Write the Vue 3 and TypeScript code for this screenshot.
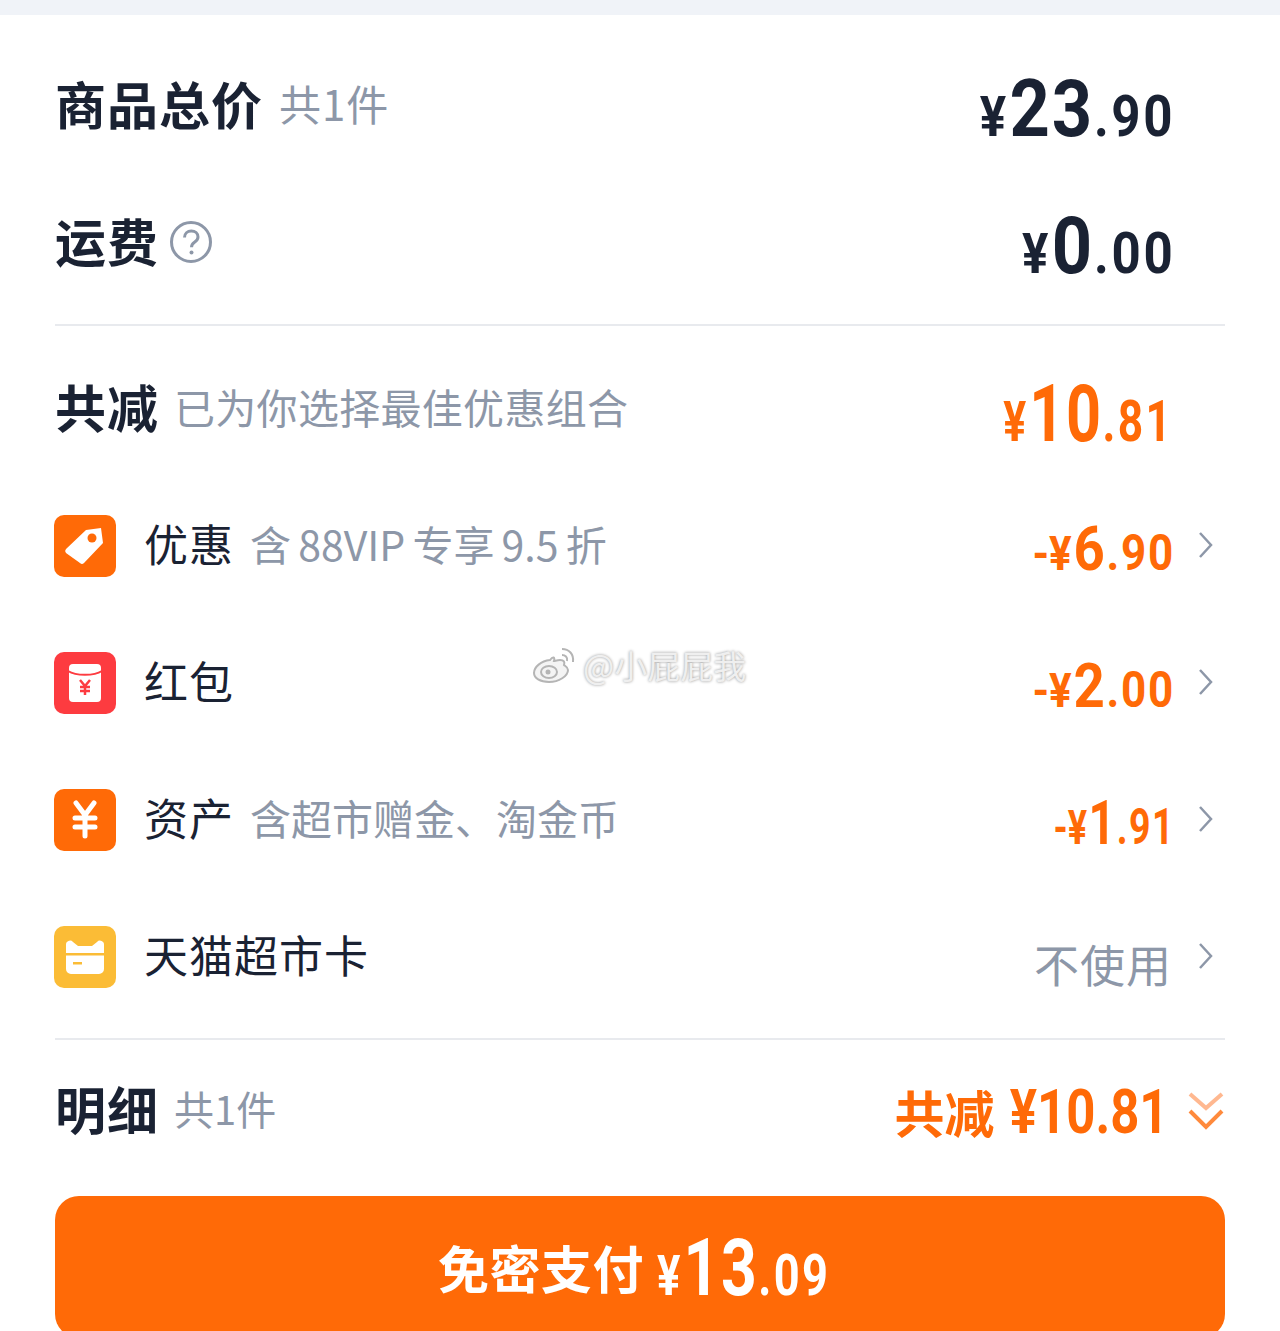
<script setup lang="ts">
interface Row { icon: string; label: string; note: string; value: string; big: string; small: string }
const rows: Row[] = [
  { icon: 'tag', label: '优惠', note: '含 88VIP 专享 9.5 折', value: '-¥', big: '6', small: '.90' },
  { icon: 'red', label: '红包', note: '', value: '-¥', big: '2', small: '.00' },
  { icon: 'coin', label: '资产', note: '含超市赠金、淘金币', value: '-¥', big: '1', small: '.91' },
  { icon: 'card', label: '天猫超市卡', note: '', value: '', big: '', small: '' },
]
</script>

<template>
  <div class="page">
    <div class="topbar"></div>
    <section class="summary">
      <div class="line first">
        <div class="left"><span class="title">商品总价</span><span class="note">共1件</span></div>
        <div class="price dark"><span class="cur">¥</span><span class="big">23</span><span class="small">.90</span></div>
      </div>
      <div class="line second">
        <div class="left">
          <span class="title">运费</span>
          <svg class="help" viewBox="0 0 44 44" width="44" height="44">
            <circle cx="22" cy="22" r="19.5" fill="none" stroke="#8d97a8" stroke-width="3"/>
            <path d="M15.5 17.5c0-4 3-6.500 6.800-6.500 3.900 0 6.700 2.500 6.700 5.900 0 2.700-1.600 4-3.500 5.300-1.900 1.300-3 2.500-3 5" fill="none" stroke="#8d97a8" stroke-width="3"/>
            <circle cx="22.500" cy="32.500" r="2" fill="#8d97a8"/>
          </svg>
        </div>
        <div class="price dark"><span class="cur">¥</span><span class="big">0</span><span class="small">.00</span></div>
      </div>
    </section>
    <section class="discounts">
      <div class="line third">
        <div class="left"><span class="title">共减</span><span class="note long">已为你选择最佳优惠组合</span></div>
        <div class="price orange total"><span class="cur">¥</span><span class="big">10</span><span class="small">.81</span></div>
      </div>
      <div v-for="row in rows" :key="row.label" class="row">
        <div class="left">
          <span class="icon" :class="row.icon">
            <svg v-if="row.icon === 'tag'" viewBox="0 0 62 62" width="62" height="62">
              <path d="M12 34 32 15l15-2 2 15-19 20a3 3 0 0 1-4 0L12 38a3 3 0 0 1 0-4z" fill="#fff"/>
              <circle cx="38" cy="23" r="4.500" fill="#ff6a07"/>
            </svg>
            <svg v-else-if="row.icon === 'red'" viewBox="0 0 62 62" width="62" height="62">
              <rect x="15" y="12" width="32" height="38" rx="4" fill="#fff"/>
              <path d="M14 19c8 5 26 5 34 0" fill="none" stroke="#fd3b40" stroke-width="2"/>
              <path d="M26 28l5 6 5-6M31 34v9M26 35h10M26 39h10" fill="none" stroke="#fd3b40" stroke-width="2.500"/>
            </svg>
            <svg v-else-if="row.icon === 'coin'" viewBox="0 0 62 62" width="62" height="62">
              <path d="M22 14l9 12 9-12M31 26v21M21 29h20M21 38h20" fill="none" stroke="#fff" stroke-width="5" stroke-linecap="round"/>
            </svg>
            <svg v-else viewBox="0 0 62 62" width="62" height="62">
              <path d="M12 19a4 4 0 0 1 7-3l5 4h14l5-4a4 4 0 0 1 7 3v24a5 5 0 0 1-5 5H17a5 5 0 0 1-5-5z" fill="#fff"/>
              <path d="M12 27h38v2.500H12z" fill="#fbbc36"/>
              <path d="M19 36h9v2.500h-9z" fill="#fbbc36"/>
            </svg>
          </span>
          <span class="label">{{ row.label }}</span>
          <span v-if="row.note" class="note rownote">{{ row.note }}</span>
        </div>
        <div class="right">
          <div v-if="row.value" class="price orange small-price" :class="{ narrow: row.big === '1' }"><span class="cur">{{ row.value }}</span><span class="big">{{ row.big }}</span><span class="small">{{ row.small }}</span></div>
          <span v-else class="unused">不使用</span>
          <svg class="chev" viewBox="0 0 16 28" width="16" height="28"><path d="M2 2l11 12L2 26" fill="none" stroke="#8d97a8" stroke-width="2.500"/></svg>
        </div>
      </div>
    </section>
    <section class="detail">
      <div class="left"><span class="title">明细</span><span class="note short">共1件</span></div>
      <div class="right-detail">
        <span class="sum"><span class="sumcn">共减</span><span class="sumnum">¥10.81</span></span>
        <svg viewBox="0 0 38 40" width="38" height="40"><path d="M3 3l16 14L35 3" fill="none" stroke="#ffb890" stroke-width="4"/><path d="M3 20l16 16 16-16" fill="none" stroke="#ff8a3c" stroke-width="4"/></svg>
      </div>
    </section>
    <button class="pay"><span class="paytext">免密支付</span><span class="price white"><span class="cur">¥</span><span class="big">13</span><span class="small">.09</span></span></button>
    <div class="watermark">
      <svg viewBox="0 0 48 40" width="48" height="40"><path d="M20 15c-9 1-16 7-16 13 0 5 6 9 15 9 10 0 19-6 19-12 0-3-3-4-4-5 1-3 0-5-4-5-3 0-5 1-6 1 1-4-1-5-4-1z" fill="#f4f4f4" stroke="#b5b5b5" stroke-width="2"/><ellipse cx="19" cy="27" rx="8" ry="6" fill="none" stroke="#b5b5b5" stroke-width="2"/><circle cx="18" cy="27" r="2.500" fill="#b5b5b5"/><path d="M32 4c7 0 12 5 11 13M32 10c3 0 6 2 5 6" fill="none" stroke="#b5b5b5" stroke-width="2"/></svg>
      <span class="wmtext">@小屁屁我</span>
    </div>
  </div>
</template>

<style>
html, body { margin: 0; background: #fff; }
</style>

<style scoped>
.page {
  position: relative;
  width: 1280px;
  height: 1331px;
  overflow: hidden;
  background: #fff;
  font-family: "Noto Sans CJK SC", "Noto Sans", sans-serif;
  color: #1a2233;
}
.topbar { height: 15px; background: #f0f3f8; }
.summary { margin: 0 55px; border-bottom: 2px solid #e8eaee; height: 311px; box-sizing: border-box; padding-top: 19px; }
.line { display: flex; justify-content: space-between; align-items: center; padding-right: 53px; }
.first { height: 137px; }
.second { height: 137px; }
.third { height: 143px; }
.left { display: flex; align-items: center; }
.title { font-size: 51px; font-weight: 700; line-height: 60px; letter-spacing: 1px; }
.note { font-size: 42px; color: #8d97a8; margin-left: 16px; line-height: 60px; font-weight: 400; letter-spacing: 1px; }
.long { font-size: 41px; margin-left: 15px; letter-spacing: 0.3px; }
.short { font-size: 40px; margin-left: 15px; letter-spacing: 0; }
.help { margin-left: 10px; transform: translateY(2px); }
.price {
  font-family: "Roboto", sans-serif;
  font-weight: 700;
  display: flex;
  align-items: baseline;
  transform: translateY(6px) scaleX(0.88);
  transform-origin: right center;
  margin-right: -3px;
}
.total { transform: translateY(8px) scaleX(0.765); margin-right: -1px; }
.dark { color: #1a2233; }
.orange { color: #ff6a07; }
.white { color: #fff; }
.cur { font-size: 56px; margin-right: 4px; }
.big { font-size: 80px; line-height: 84px; letter-spacing: 2px; }
.small { font-size: 58px; letter-spacing: 3px; }
.discounts { margin: 0 55px; border-bottom: 2px solid #e8eaee; height: 714px; box-sizing: border-box; padding-top: 8px; }
.row { height: 137px; display: flex; justify-content: space-between; align-items: center; }
.icon { width: 62px; height: 62px; border-radius: 10px; display: block; flex: none; margin-left: -1px; margin-right: 28px; }
.tag, .coin { background: #ff6a07; }
.red { background: #fd3b40; }
.card { background: #fbbc36; }
.icon svg { display: block; }
.label { font-size: 44px; font-weight: 400; line-height: 60px; letter-spacing: 1px; transform: translateY(-3px); }
.rownote { margin-left: 16px; font-size: 41px; letter-spacing: 0; word-spacing: -2px; transform: translateY(-3px); }
.right { display: flex; align-items: center; }
.small-price { transform: translateY(4px) scaleX(0.88); margin-right: 0; }
.small-price.narrow { transform: translateY(4px) scaleX(0.75); }
.small-price .cur { font-size: 48px; margin-right: 2px; }
.small-price .big { font-size: 62px; line-height: 64px; }
.small-price .small { font-size: 50px; letter-spacing: 2px; }
.chev { margin-left: 23px; margin-right: 11px; transform: translateY(-1px); }
.unused { font-size: 45px; color: #8d97a8; font-weight: 400; letter-spacing: 1px; transform: translateY(7px) translateX(-3px); }
.detail { margin: 0 55px; height: 156px; box-sizing: border-box; padding-bottom: 20px; display: flex; justify-content: space-between; align-items: center; }
.right-detail { display: flex; align-items: center; gap: 18px; transform: translateY(3px); }
.sum { font-size: 50px; color: #ff6a07; font-weight: 700; display: flex; align-items: center; gap: 14px; }
.sumnum { font-family: "Roboto", sans-serif; font-size: 62px; transform: scaleX(0.82); transform-origin: right center; margin-left: -33px; }
.pay {
  display: flex;
  align-items: center;
  justify-content: flex-start;
  gap: 13px;
  width: 1170px;
  height: 142px;
  margin: 0 55px;
  padding: 0 0 0 383px;
  border: 0;
  border-radius: 24px;
  background: #ff6a07;
  color: #fff;
  font-family: inherit;
}
.pay .price { transform: translateY(1px) scaleX(0.78); transform-origin: left center; margin-right: 0; }
.paytext { font-size: 51px; font-weight: 700; letter-spacing: 0.5px; }
.watermark {
  position: absolute;
  left: 530px;
  top: 641px;
  display: flex;
  align-items: center;
  gap: 5px;
}
.wmtext { font-size: 33px; color: #efefef; text-shadow: 0 0 3px #8f8f8f; font-family: "Noto Sans CJK SC", sans-serif; }
</style>
